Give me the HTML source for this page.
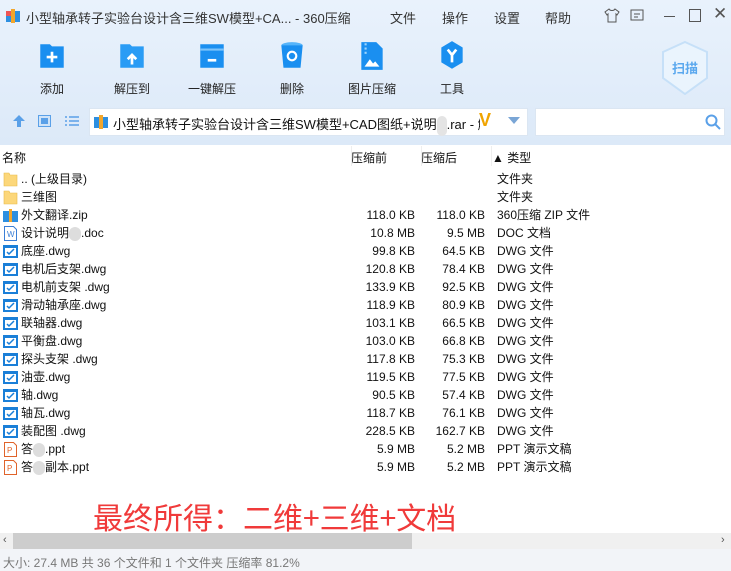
<!DOCTYPE html>
<html><head><meta charset="utf-8"><style>
*{margin:0;padding:0;box-sizing:border-box}
body{width:731px;height:571px;overflow:hidden;font-family:"Liberation Sans","Noto Sans CJK SC",sans-serif;font-size:12px;color:#111;background:#fff;position:relative}
.hdr{position:absolute;left:0;top:0;width:731px;height:145px;background:linear-gradient(#e9f2fc,#dce9f8)}
.abs{position:absolute}
.menu span{position:absolute;top:8px;font-size:13px;color:#333}
.tb{position:absolute;top:40px;width:70px;text-align:center;font-size:12px;color:#222}
.tb .ic{display:block;margin:0 auto 8px;width:26px;height:32px}
.row{position:absolute;left:0;height:18px;width:731px;font-size:12px;line-height:18px}
.row .n{position:absolute;left:21px}
.row .s{position:absolute;right:316px}
.row .a{position:absolute;right:246px}
.row .t{position:absolute;left:497px}
.row .i{position:absolute;left:3px;top:2px;width:15px;height:15px}
.blur{display:inline-block;width:12px;height:14px;background:#ddd;border-radius:6px;vertical-align:middle}
</style></head><body>
<div class="hdr"></div>
<svg class="abs" style="left:6px;top:9px" width="14" height="14"><rect x="0" y="2" width="14" height="11" fill="#2d8fe0"/><rect x="5" y="0" width="4" height="14" fill="#f2a62c"/><rect x="0" y="2" width="5" height="5" fill="#e55"/></svg>
<div class="abs" style="left:26px;top:8px;font-size:13px;color:#333">小型轴承转子实验台设计含三维SW模型+CA... - 360压缩</div>
<div class="menu"><span style="left:390px">文件</span><span style="left:442px">操作</span><span style="left:494px">设置</span><span style="left:545px">帮助</span></div>
<svg class="abs" style="left:604px;top:8px" width="16" height="15"><path d="M5 1L1 4l2 3 1-1v8h8V6l1 1 2-3-4-3c-1 2-5 2-6 0z" fill="none" stroke="#555"/></svg>
<svg class="abs" style="left:630px;top:9px" width="14" height="13"><rect x="1" y="1" width="12" height="10" fill="none" stroke="#555"/><path d="M4 5h6M4 8h4" stroke="#555"/></svg>
<div class="abs" style="left:664px;top:16px;width:11px;height:1px;background:#555"></div>
<div class="abs" style="left:689px;top:9px;width:12px;height:13px;border:1px solid #555"></div>
<div class="abs" style="left:713px;top:4px;font-size:17px;color:#555">✕</div>
<div class="tb" style="left:17px"><svg class="ic" viewBox="0 0 24 30"><path d="M1 4h9l2 2h11v20H1z" fill="#1a8ff0"/><path d="M12 11v10M7 16h10" stroke="#fff" stroke-width="2.5"/></svg>添加</div>
<div class="tb" style="left:97px"><svg class="ic" viewBox="0 0 24 30"><path d="M1 4h9l2 2h11v20H1z" fill="#2a9cf5"/><path d="M12 23v-8M8 18l4-4 4 4" stroke="#fff" stroke-width="2.5" fill="none"/></svg>解压到</div>
<div class="tb" style="left:177px"><svg class="ic" viewBox="0 0 24 30"><path d="M1 4h22v22H1z" fill="#1a8ff0"/><path d="M1 9h22" stroke="#7cc3fa" stroke-width="2"/><path d="M8 19h8" stroke="#fff" stroke-width="2.5"/></svg>一键解压</div>
<div class="tb" style="left:257px"><svg class="ic" viewBox="0 0 24 30"><ellipse cx="12" cy="5" rx="10" ry="3" fill="#55b4fa"/><path d="M2 5l2 21h16l2-21z" fill="#1a8ff0"/><circle cx="12" cy="15" r="4" fill="none" stroke="#fff" stroke-width="2"/></svg>删除</div>
<div class="tb" style="left:337px"><svg class="ic" viewBox="0 0 24 30"><path d="M2 2h14l6 6v20H2z" fill="#1a8ff0"/><path d="M5 25l5-7 3 4 2-2 4 5z" fill="#fff"/><path d="M6 3v10" stroke="#9dd4fc" stroke-dasharray="2 2" stroke-width="2"/></svg>图片压缩</div>
<div class="tb" style="left:417px"><svg class="ic" viewBox="0 0 24 30"><path d="M12 1l10 6v14l-10 6-10-6V7z" fill="#1a8ff0"/><path d="M8 9l4 5 4-5M12 14v7" stroke="#fff" stroke-width="2.5" fill="none"/></svg>工具</div>
<svg class="abs" style="left:660px;top:40px" width="50" height="56"><path d="M25 2l22 10v26L25 54 3 38V12z" fill="#eaf4fd" stroke="#c6e0f8" stroke-width="2"/><text x="25" y="33" font-size="13" font-weight="bold" fill="#5aa8ee" text-anchor="middle" font-family="Noto Sans CJK SC">扫描</text></svg>
<svg class="abs" style="left:12px;top:114px" width="14" height="14"><path d="M7 1l6 6H9v6H5V7H1z" fill="#5aa0e8"/></svg>
<svg class="abs" style="left:38px;top:115px" width="13" height="12"><rect x="0.5" y="0.5" width="12" height="11" fill="#cfe3f8" stroke="#5aa0e8"/><rect x="3" y="3" width="7" height="6" fill="#5aa0e8"/></svg>
<svg class="abs" style="left:65px;top:115px" width="14" height="12"><path d="M0 2h2M4 2h10M0 6h2M4 6h10M0 10h2M4 10h10" stroke="#5aa0e8" stroke-width="1.5"/></svg>
<div class="abs" style="left:89px;top:108px;width:439px;height:28px;background:#fff;border:1px solid #dbe6f2;overflow:hidden"></div>
<svg class="abs" style="left:94px;top:115px" width="14" height="14"><rect x="0" y="2" width="14" height="11" fill="#2d8fe0"/><rect x="5" y="0" width="4" height="14" fill="#f2a62c"/></svg>
<div class="abs" style="left:113px;top:114px;font-size:13px;width:367px;overflow:hidden;white-space:nowrap">小型轴承转子实验台设计含三维SW模型+CAD图纸+说明<span style="display:inline-block;width:10px;height:20px;background:#e4e4e4;border-radius:5px;vertical-align:middle"></span>.rar - 解包</div>
<div class="abs" style="left:479px;top:110px;font-size:18px;color:#f0a400;font-weight:bold">V</div>
<svg class="abs" style="left:508px;top:117px" width="12" height="8"><path d="M0 0h12L6 7z" fill="#7aa6d6"/></svg>
<div class="abs" style="left:535px;top:108px;width:190px;height:28px;background:#fff;border:1px solid #dbe6f2"></div>
<svg class="abs" style="left:705px;top:114px" width="16" height="16"><circle cx="6.5" cy="6.5" r="5" fill="none" stroke="#5aa0e8" stroke-width="2"/><path d="M10 10l5 5" stroke="#5aa0e8" stroke-width="2"/></svg>
<div class="abs" style="left:0;top:145px;width:731px;height:22px;background:#fff"></div>
<div class="abs" style="left:2px;top:149px">名称</div>
<div class="abs" style="left:351px;top:149px">压缩前</div>
<div class="abs" style="left:421px;top:149px">压缩后</div>
<div class="abs" style="left:492px;top:149px">▲ 类型</div>
<div class="abs" style="left:351px;top:146px;width:1px;height:20px;background:#eee"></div>
<div class="abs" style="left:421px;top:146px;width:1px;height:20px;background:#eee"></div>
<div class="abs" style="left:491px;top:146px;width:1px;height:20px;background:#eee"></div>

<div class="row" style="top:170px"><svg class="i" viewBox="0 0 15 15"><path d="M1 1h5l1 2h7v11H1z" fill="#fcd77a" stroke="#e8bb4a" stroke-width=".6"/></svg><span class="n">.. (上级目录)</span><span class="t">文件夹</span></div>
<div class="row" style="top:188px"><svg class="i" viewBox="0 0 15 15"><path d="M1 1h5l1 2h7v11H1z" fill="#fcd77a" stroke="#e8bb4a" stroke-width=".6"/></svg><span class="n">三维图</span><span class="t">文件夹</span></div>
<div class="row" style="top:206px"><svg class="i" viewBox="0 0 15 15"><rect x="0" y="3" width="15" height="11" fill="#2d8fe0"/><rect x="6" y="1" width="3" height="13" fill="#f2a62c"/></svg><span class="n">外文翻译.zip</span><span class="s">118.0 KB</span><span class="a">118.0 KB</span><span class="t">360压缩 ZIP 文件</span></div>
<div class="row" style="top:224px"><svg class="i" viewBox="0 0 15 15"><path d="M1.5 .5h9l3 3v11h-12z" fill="#fff" stroke="#3b7fd6"/><text x="4" y="11" font-size="8" fill="#3b7fd6" font-family="Liberation Sans">W</text></svg><span class="n">设计说明<span class="blur"></span>.doc</span><span class="s">10.8 MB</span><span class="a">9.5 MB</span><span class="t">DOC 文档</span></div>
<div id="dw"></div>
<script>
var d=[["底座.dwg","99.8 KB","64.5 KB"],["电机后支架.dwg","120.8 KB","78.4 KB"],["电机前支架 .dwg","133.9 KB","92.5 KB"],["滑动轴承座.dwg","118.9 KB","80.9 KB"],["联轴器.dwg","103.1 KB","66.5 KB"],["平衡盘.dwg","103.0 KB","66.8 KB"],["探头支架 .dwg","117.8 KB","75.3 KB"],["油壶.dwg","119.5 KB","77.5 KB"],["轴.dwg","90.5 KB","57.4 KB"],["轴瓦.dwg","118.7 KB","76.1 KB"],["装配图 .dwg","228.5 KB","162.7 KB"]];
var h="";d.forEach(function(r,i){h+='<div class="row" style="top:'+(242+18*i)+'px"><svg class="i" viewBox="0 0 15 15"><rect x="0" y="1" width="15" height="13" fill="#1a7fd8"/><rect x="2" y="4" width="11" height="8" fill="#fff"/><path d="M4 8l2 2 5-5" stroke="#1a7fd8" stroke-width="1.5" fill="none"/></svg><span class="n">'+r[0]+'</span><span class="s">'+r[1]+'</span><span class="a">'+r[2]+'</span><span class="t">DWG 文件</span></div>'});
var p=['答<span class="blur"></span>.ppt','答<span class="blur"></span>副本.ppt'];
p.forEach(function(r,i){h+='<div class="row" style="top:'+(440+18*i)+'px"><svg class="i" viewBox="0 0 15 15"><path d="M1.5 .5h9l3 3v11h-12z" fill="#fff" stroke="#e0632a"/><text x="4" y="11" font-size="8" fill="#e0632a" font-family="Liberation Sans">P</text></svg><span class="n">'+r+'</span><span class="s">5.9 MB</span><span class="a">5.2 MB</span><span class="t">PPT 演示文稿</span></div>'});
document.getElementById("dw").innerHTML=h;
</script>
<div class="abs" style="left:93px;top:496px;font-size:30px;color:#f03a3a;font-family:'Noto Sans CJK SC',sans-serif;line-height:40px;white-space:nowrap">最终所得：二维+三维+文档</div>
<div class="abs" style="left:0;top:533px;width:731px;height:16px;background:#f0f0f0"></div>
<div class="abs" style="left:13px;top:533px;width:399px;height:16px;background:#cdcdcd"></div>
<div class="abs" style="left:3px;top:534px;font-size:11px;color:#555">‹</div>
<div class="abs" style="left:721px;top:534px;font-size:11px;color:#555">›</div>
<div class="abs" style="left:0;top:549px;width:731px;height:22px;background:#f2f4f8"></div>
<div class="abs" style="left:3px;top:554px;font-size:12px;color:#777">大小: 27.4 MB 共 36 个文件和 1 个文件夹 压缩率 81.2%</div>
</body></html>
